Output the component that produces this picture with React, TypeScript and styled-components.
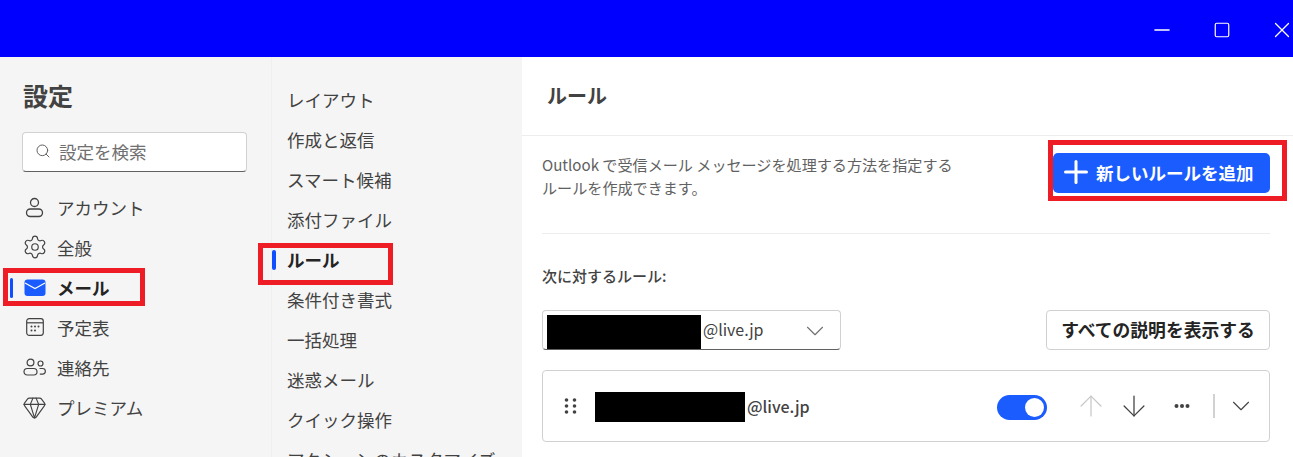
import styled, { createGlobalStyle } from 'styled-components';
import { ArrowDown, ArrowUp, ChevronDown, Gem, Minus, Plus, Search, Settings, Square, X } from 'lucide-react';

const GlobalStyle = createGlobalStyle`
  html, body {
    margin: 0;
    height: 100%;
    overflow: hidden;
    background: #fff;
  }
  body {
    font-family: "Noto Sans CJK JP", "Open Sans", "Liberation Sans", sans-serif;
    color: #424242;
  }
`;

const Page = styled.div`
  position: relative;
  width: 1293px;
  height: 457px;
  overflow: hidden;
  display: flex;
  flex-direction: column;
`;

const TitleBar = styled.header`
  height: 57px;
  flex: none;
  background: #0000ff;
  display: flex;
  justify-content: flex-end;
  align-items: center;
  gap: 40px;
  padding: 3px 1px 0 0;
  box-sizing: border-box;
  color: #fff;
`;

const WindowButton = styled.span`
  width: 20px;
  height: 20px;
  display: flex;
  align-items: center;
  justify-content: center;

  svg {
    flex: none;
  }
`;

const Body = styled.div`
  flex: 1;
  display: flex;
  min-height: 0;
`;

const Sidebar = styled.aside`
  width: 271px;
  flex: none;
  background: #f5f5f5;
  padding: 18px 24px 0 22px;
  box-sizing: border-box;
`;

const SidebarTitle = styled.h1`
  margin: 0 0 17px 1px;
  font-size: 25px;
  line-height: 40px;
  font-weight: 700;
  color: #424242;
`;

const SearchBox = styled.div`
  height: 40px;
  background: #fff;
  border: 1px solid #d1d1d1;
  border-bottom-color: #616161;
  border-radius: 4px;
  box-sizing: border-box;
  display: flex;
  align-items: center;
  gap: 8px;
  padding: 0 0 2px 12px;
  margin-bottom: 16px;
  font-size: 17.5px;
  color: #707070;
`;

const NavRow = styled.div<{ $active?: boolean }>`
  position: relative;
  height: 40px;
  display: flex;
  align-items: center;
  gap: 12px;
  padding: 0 0 2px 2px;
  box-sizing: border-box;
  font-size: 17.5px;
  font-weight: ${(p) => (p.$active ? 700 : 400)};
  color: ${(p) => (p.$active ? '#242424' : '#424242')};
`;

const ActiveBar = styled.span<{ $left: number; $width: number }>`
  position: absolute;
  left: ${(p) => p.$left}px;
  top: 10px;
  width: ${(p) => p.$width}px;
  height: 20px;
  border-radius: 2px;
  background: #0f4fff;
`;

const IconSlot = styled.span`
  width: 21px;
  height: 21px;
  flex: none;
  display: flex;
  align-items: center;
  justify-content: center;

  svg {
    flex: none;
  }
`;

const SubNav = styled.nav`
  width: 251px;
  flex: none;
  background: #f5f5f5;
  border-left: 1px solid #efefef;
  padding: 23px 0 0 15px;
  box-sizing: border-box;
  overflow: hidden;
`;

const SubRow = styled(NavRow)`
  padding-left: 0;
  white-space: nowrap;
`;

const Content = styled.main`
  flex: 1;
  min-width: 0;
`;

const ContentHeader = styled.div`
  height: 79px;
  box-sizing: border-box;
  border-bottom: 1px solid #ededed;
  padding: 18px 0 0 25px;
`;

const ContentTitle = styled.h2`
  margin: 0;
  font-size: 20px;
  line-height: 42px;
  font-weight: 700;
  color: #424242;
`;

const ContentInner = styled.div`
  padding: 0 23px 0 20px;
`;

const IntroRow = styled.div`
  height: 98px;
  box-sizing: border-box;
  border-bottom: 1px solid #ededed;
  display: flex;
  justify-content: space-between;
  padding-top: 17px;
`;

const IntroText = styled.p`
  margin: 0;
  font-size: 15.1px;
  line-height: 23px;
  color: #616161;
  white-space: nowrap;
`;

const PrimaryButton = styled.button`
  width: 217px;
  height: 40px;
  background: #1b5cff;
  border: none;
  border-radius: 5px;
  color: #fff;
  font: inherit;
  font-size: 17.5px;
  font-weight: 700;
  display: flex;
  align-items: center;
  gap: 2px;
  padding: 0 0 2px 5px;
  white-space: nowrap;
`;

const SectionLabel = styled.div`
  margin-top: 30px;
  font-size: 15px;
  line-height: 24px;
  font-weight: 500;
  color: #424242;
`;

const ControlRow = styled.div`
  margin-top: 22px;
  display: flex;
  justify-content: space-between;
`;

const Select = styled.div`
  width: 299px;
  height: 40px;
  background: #fff;
  border: 1px solid #d1d1d1;
  border-bottom-color: #616161;
  border-radius: 4px;
  box-sizing: border-box;
  display: flex;
  align-items: center;
  padding: 0 0 2px 4px;
  font-size: 16px;
  color: #424242;
`;

const Redacted = styled.span<{ $w: number; $h: number; $top: number }>`
  width: ${(p) => p.$w}px;
  height: ${(p) => p.$h}px;
  flex: none;
  background: #000;
  margin: ${(p) => p.$top}px 2px 0 0;
`;

const SelectChevron = styled.span`
  margin: 4px 10px 0 auto;
  display: flex;
  color: #707070;
`;

const OutlineButton = styled.button`
  width: 224px;
  height: 40px;
  background: #fff;
  border: 1px solid #d1d1d1;
  border-radius: 4px;
  font: inherit;
  font-size: 17.8px;
  font-weight: 700;
  color: #242424;
  padding: 0 0 2px;
  white-space: nowrap;
`;

const RuleCard = styled.div`
  margin-top: 20px;
  height: 72px;
  border: 1px solid #d1d1d1;
  border-radius: 4px;
  box-sizing: border-box;
  display: flex;
  align-items: center;
  padding-left: 21px;
  font-size: 16px;
  font-weight: 500;
  color: #424242;
`;

const Handle = styled.svg`
  width: 14px;
  height: 20px;
  margin-right: 17px;
  flex: none;
`;

const RuleActions = styled.div`
  margin-left: auto;
  display: flex;
  align-items: center;
`;

const Toggle = styled.span`
  width: 50px;
  height: 25px;
  border-radius: 13px;
  background: #1b5cff;
  position: relative;
  margin: 3px 27px 0 0;
`;

const ToggleKnob = styled.span`
  position: absolute;
  right: 3px;
  top: 3px;
  width: 19px;
  height: 19px;
  border-radius: 50%;
  background: #fff;
`;

const ActionIcon = styled.span<{ $color?: string; $gap?: number }>`
  display: flex;
  color: ${(p) => p.$color ?? '#424242'};
  margin-right: ${(p) => p.$gap ?? 0}px;
`;

const Divider = styled.span`
  width: 2px;
  height: 24px;
  background: #d1d1d1;
  margin-right: 11px;
`;

const Annotation = styled.div<{ $x: number; $y: number; $w: number; $h: number }>`
  position: absolute;
  left: ${(p) => p.$x}px;
  top: ${(p) => p.$y}px;
  width: ${(p) => p.$w}px;
  height: ${(p) => p.$h}px;
  box-sizing: border-box;
  border: 5px solid #ee1c25;
  pointer-events: none;
`;

const UserIcon = () => (
  <svg width="21" height="21" viewBox="0 0 21 21" fill="none" stroke="#424242" strokeWidth="1.3">
    <circle cx="10.5" cy="5.5" r="4" />
    <rect x="2.5" y="12" width="16" height="7.5" rx="3.7" />
  </svg>
);

const MailIcon = () => (
  <svg width="22" height="18" viewBox="0 0 22 18">
    <rect x="0.5" y="1.5" width="21" height="16.5" rx="3" fill="#1b5cff" />
    <path d="M1 5 L11 10.5 L21 5" fill="none" stroke="#fff" strokeWidth="1.2" />
  </svg>
);

const CalendarIcon = () => (
  <svg width="20" height="20" viewBox="0 0 20 20" fill="none" stroke="#424242" strokeWidth="1.2">
    <rect x="1.7" y="1.7" width="16.6" height="16.6" rx="2.5" />
    <path d="M2 5.8 H18" />
    <g fill="#424242" stroke="none">
      <circle cx="6.5" cy="9.5" r="1" />
      <circle cx="10" cy="9.5" r="1" />
      <circle cx="13.5" cy="9.5" r="1" />
      <circle cx="6.5" cy="13.5" r="1" />
      <circle cx="10" cy="13.5" r="1" />
    </g>
  </svg>
);

const PeopleIcon = () => (
  <svg width="23" height="20" viewBox="0 0 23 20" fill="none" stroke="#424242" strokeWidth="1.2">
    <circle cx="7.5" cy="5.5" r="3.4" />
    <circle cx="17.5" cy="6.5" r="2.5" />
    <rect x="1" y="11.5" width="13" height="6.5" rx="3.2" />
    <path d="M16.5 11.5 H19.5 A2.8 2.8 0 0 1 19.5 17.2 H16.8" />
  </svg>
);

const DotsIcon = () => (
  <svg width="16" height="6" viewBox="0 0 16 6" fill="#424242">
    <circle cx="2.5" cy="3" r="2" />
    <circle cx="8" cy="3" r="2" />
    <circle cx="13.5" cy="3" r="2" />
  </svg>
);

const sideItems = [
  { label: 'アカウント', icon: <UserIcon /> },
  { label: '全般', icon: <Settings size={26} strokeWidth={1.1} color="#424242" /> },
  { label: 'メール', icon: <MailIcon />, active: true },
  { label: '予定表', icon: <CalendarIcon /> },
  { label: '連絡先', icon: <PeopleIcon /> },
  { label: 'プレミアム', icon: <Gem size={25} strokeWidth={1.1} color="#424242" /> },
];

const subItems = [
  'レイアウト',
  '作成と返信',
  'スマート候補',
  '添付ファイル',
  'ルール',
  '条件付き書式',
  '一括処理',
  '迷惑メール',
  'クイック操作',
  'アクションのカスタマイズ',
];

export default function App() {
  return (
    <Page>
      <GlobalStyle />
      <TitleBar>
        <WindowButton>
          <Minus size={24} strokeWidth={1.6} />
        </WindowButton>
        <WindowButton>
          <Square size={18} strokeWidth={1.6} />
        </WindowButton>
        <WindowButton>
          <X size={26} strokeWidth={1.2} />
        </WindowButton>
      </TitleBar>
      <Body>
        <Sidebar>
          <SidebarTitle>設定</SidebarTitle>
          <SearchBox>
            <Search size={16} strokeWidth={1.5} color="#616161" />
            設定を検索
          </SearchBox>
          {sideItems.map((item) => (
            <NavRow key={item.label} $active={item.active}>
              {item.active && <ActiveBar $left={-12} $width={3} />}
              <IconSlot>{item.icon}</IconSlot>
              {item.label}
            </NavRow>
          ))}
        </Sidebar>
        <SubNav>
          {subItems.map((label) => (
            <SubRow key={label} $active={label === 'ルール'}>
              {label === 'ルール' && <ActiveBar $left={-15} $width={4} />}
              {label}
            </SubRow>
          ))}
        </SubNav>
        <Content>
          <ContentHeader>
            <ContentTitle>ルール</ContentTitle>
          </ContentHeader>
          <ContentInner>
            <IntroRow>
              <IntroText>
                Outlook で受信メール メッセージを処理する方法を指定する
                <br />
                ルールを作成できます。
              </IntroText>
              <PrimaryButton>
                <Plus size={36} strokeWidth={2} />
                新しいルールを追加
              </PrimaryButton>
            </IntroRow>
            <SectionLabel>次に対するルール:</SectionLabel>
            <ControlRow>
              <Select>
                <Redacted $w={154} $h={34} $top={6} />
                @live.jp
                <SelectChevron>
                  <ChevronDown size={30} strokeWidth={0.9} />
                </SelectChevron>
              </Select>
              <OutlineButton>すべての説明を表示する</OutlineButton>
            </ControlRow>
            <RuleCard>
              <Handle viewBox="0 0 14 20" fill="#424242">
                <circle cx="2.5" cy="4" r="1.8" />
                <circle cx="10.5" cy="4" r="1.8" />
                <circle cx="2.5" cy="10" r="1.8" />
                <circle cx="10.5" cy="10" r="1.8" />
                <circle cx="2.5" cy="16" r="1.8" />
                <circle cx="10.5" cy="16" r="1.8" />
              </Handle>
              <Redacted $w={150} $h={30} $top={2} />
              @live.jp
              <RuleActions>
                <Toggle>
                  <ToggleKnob />
                </Toggle>
                <ActionIcon $color="#c8c8c8" $gap={9}>
                  <ArrowUp size={34} strokeWidth={0.9} />
                </ActionIcon>
                <ActionIcon $gap={23}>
                  <ArrowDown size={34} strokeWidth={0.9} />
                </ActionIcon>
                <ActionIcon $gap={23}>
                  <DotsIcon />
                </ActionIcon>
                <Divider />
                <ActionIcon $gap={13}>
                  <ChevronDown size={30} strokeWidth={0.9} />
                </ActionIcon>
              </RuleActions>
            </RuleCard>
          </ContentInner>
        </Content>
      </Body>
      <Annotation $x={3} $y={268} $w={142} $h={38} />
      <Annotation $x={258} $y={243} $w={135} $h={42} />
      <Annotation $x={1048} $y={140} $w={239} $h={61} />
    </Page>
  );
}
